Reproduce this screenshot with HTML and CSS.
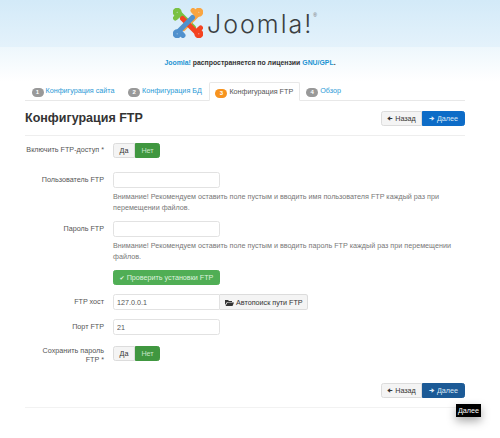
FILE: index.html
```html
<!DOCTYPE html>
<html lang="ru">
<head>
    <meta charset="UTF-8">
    <title>Конфигурация FTP</title>
    <link rel="stylesheet" href="styles.css">
</head>
<body>
    <div class="header">
        <div class="logo">
            <svg width="30" height="30" viewBox="0 0 30 30">
                <g fill="none" stroke-width="5" stroke-linecap="round" stroke-linejoin="round">
                    <g stroke="#7ac143">
                        <path d="M2.500 10 L7 6 L20.500 19.500"/>
                        <circle cx="4.200" cy="4.200" r="2"/>
                    </g>
                    <g stroke="#f9a541" transform="rotate(90 15 15)">
                        <path d="M2.500 10 L7 6 L20.500 19.500"/>
                        <circle cx="4.200" cy="4.200" r="2"/>
                    </g>
                    <g stroke="#f44321" transform="rotate(180 15 15)">
                        <path d="M2.500 10 L7 6 L20.500 19.500"/>
                        <circle cx="4.200" cy="4.200" r="2"/>
                    </g>
                    <g stroke="#5091cd" transform="rotate(270 15 15)">
                        <path d="M2.500 10 L7 6 L20.500 19.500"/>
                        <circle cx="4.200" cy="4.200" r="2"/>
                    </g>
                </g>
            </svg>
            <span class="logo-text">Joomla!</span><span class="logo-reg">®</span>
        </div>
    </div>
    <div class="license">
        <a href="#">Joomla!</a> распространяется по лицензии <a href="#">GNU/GPL</a>.
    </div>
    <div class="container">
        <ul class="tabs">
            <li><span class="num">1</span><a href="#">Конфигурация сайта</a></li>
            <li><span class="num">2</span><a href="#">Конфигурация БД</a></li>
            <li class="active"><span class="num">3</span>Конфигурация FTP</li>
            <li><span class="num">4</span><a href="#">Обзор</a></li>
        </ul>
        <div class="title-row">
            <h2>Конфигурация FTP</h2>
            <div class="btn-group">
                <button class="btn"><span class="arrow">&#129032;</span>Назад</button>
                <button class="btn btn-primary"><span class="arrow">&#129034;</span>Далее</button>
            </div>
        </div>
        <form class="form" autocomplete="off">
            <div class="row row-first">
                <label>Включить FTP-доступ *</label>
                <div class="toggle">
                    <button type="button" class="btn">Да</button>
                    <button type="button" class="btn btn-on">Нет</button>
                </div>
            </div>
            <div class="row row-user">
                <label class="middle">Пользователь FTP</label>
                <div class="field">
                    <input type="text">
                    <p class="help">Внимание! Рекомендуем оставить поле пустым и вводить имя пользователя FTP каждый раз при перемещении файлов.</p>
                </div>
            </div>
            <div class="row row-pass">
                <label class="middle">Пароль FTP</label>
                <div class="field">
                    <input type="password">
                    <p class="help">Внимание! Рекомендуем оставить поле пустым и вводить пароль FTP каждый раз при перемещении файлов.</p>
                </div>
            </div>
            <div class="row row-check">
                <label></label>
                <button type="button" class="btn btn-success"><span class="arrow">✔</span>Проверить установки FTP</button>
            </div>
            <div class="row row-host">
                <label class="middle">FTP хост</label>
                <div class="input-group">
                    <input type="text" value="127.0.0.1">
                    <button type="button" class="btn btn-addon">
                        <svg width="9" height="7" viewBox="0 0 9 7"><path d="M0 1h3l1 1h3v1H2L0 6zM2.500 3.500H9L7.500 7H.5z" fill="#333"/></svg>Автопоиск пути FTP
                    </button>
                </div>
            </div>
            <div class="row row-port">
                <label class="middle">Порт FTP</label>
                <input type="text" value="21">
            </div>
            <div class="row row-save">
                <label>Сохранить пароль FTP&nbsp;*</label>
                <div class="toggle">
                    <button type="button" class="btn">Да</button>
                    <button type="button" class="btn btn-on">Нет</button>
                </div>
            </div>
        </form>
        <div class="bottom-row">
            <div class="btn-group">
                <button class="btn"><span class="arrow">&#129032;</span>Назад</button>
                <button class="btn btn-hover"><span class="arrow">&#129034;</span>Далее</button>
            </div>
            <div class="tooltip">Далее</div>
        </div>
    </div>
</body>
</html>
```

FILE: styles.css
```css
html, body {
    margin: 0;
    padding: 0;
}
body {
    background: #fff;
    font-family: "Liberation Sans", Arial, sans-serif;
    font-size: 7.2px;
    color: #555;
    height: 438px;
    overflow: hidden;
}
a {
    color: #2a9ad6;
    text-decoration: none;
}
.header {
    height: 47px;
    background: linear-gradient(#d3eaf8, #e4f2fb);
    box-sizing: border-box;
    padding-top: 8px;
}
.logo {
    display: flex;
    justify-content: center;
    align-items: flex-start;
    height: 30px;
    margin-left: -10px;
}
.logo-text {
    font-family: Inter, sans-serif;
    font-weight: 300;
    font-size: 25px;
    letter-spacing: 2px;
    line-height: 32px;
    color: #3b3f42;
    margin-left: 4px;
}
.logo-reg {
    font-size: 5px;
    color: #666;
    line-height: 14px;
}
.license {
    height: 35px;
    box-sizing: border-box;
    padding-top: 11px;
    background: linear-gradient(#eef7fc, #fff);
    text-align: center;
    font-size: 6.900px;
    font-weight: bold;
    color: #333;
    line-height: 10px;
}
.license a {
    color: #1c93d2;
}
.container {
    margin: 0 35px 0 25px;
    position: relative;
}
.tabs {
    list-style: none;
    margin: 0;
    padding: 0;
    display: flex;
    height: 19px;
    border-bottom: 1px solid #e8e8e8;
    box-sizing: border-box;
    line-height: 18px;
}
.tabs li {
    padding: 0 7px 0 6.500px;
    white-space: nowrap;
}
.tabs li.active {
    background: #fff;
    border: 1px solid #e8e8e8;
    border-bottom: 1px solid #fff;
    border-radius: 2px 2px 0 0;
    height: 19px;
    box-sizing: border-box;
    padding: 0 5.500px;
    line-height: 17px;
}
.num {
    display: inline-block;
    background: #999;
    color: #fff;
    border-radius: 4.500px;
    width: 12px;
    height: 9px;
    line-height: 9px;
    text-align: center;
    font-size: 6px;
    font-weight: bold;
    margin-right: 2px;
    vertical-align: -0.500px;
}
.active .num {
    background: #f7931e;
}
.title-row {
    display: flex;
    justify-content: space-between;
    align-items: center;
    height: 35px;
    border-bottom: 1px solid #eee;
    box-sizing: border-box;
}
h2 {
    margin: 0;
    font-size: 12.500px;
    color: #333;
}
.btn {
    font: inherit;
    height: 15px;
    padding: 0 7px;
    border: 1px solid #dcdcdc;
    border-radius: 2.500px;
    background: #f4f4f4;
    color: #333;
    white-space: nowrap;
    line-height: 13px;
}
.arrow {
    margin-right: 2px;
    font-family: "DejaVu Sans", sans-serif;
    font-size: 6px;
}
.btn-group {
    display: flex;
}
.btn-group .btn {
    width: 41px;
    padding: 0;
    border-radius: 2.500px 0 0 2.500px;
}
.btn-group .btn-primary,
.btn-group .btn-hover {
    width: 43px;
    border-radius: 0 2.500px 2.500px 0;
    color: #dbe9f6;
}
.btn-primary {
    background: #0d6cc7;
    border-color: #0d6cc7;
}
.btn-hover {
    background: #1c5a96;
    border-color: #1c5a96;
}
.row {
    display: flex;
    align-items: flex-start;
}
.row label {
    width: 79px;
    margin-right: 9px;
    flex: none;
    text-align: right;
    line-height: 9px;
}
.row label.middle {
    line-height: 15px;
}
.row-first {
    margin-top: 7px;
}
.row-first label {
    padding-top: 2px;
}
.row-user {
    margin-top: 14px;
}
.row-pass {
    margin-top: 8px;
}
.row-check {
    margin-top: 8px;
}
.row-host {
    margin-top: 9px;
}
.row-port {
    margin-top: 9px;
}
.row-save {
    margin-top: 11px;
}
.toggle {
    display: flex;
}
.toggle .btn {
    width: 22px;
    padding: 0;
    border-radius: 2.500px 0 0 2.500px;
}
.toggle .btn-on {
    width: 25px;
    background: #409740;
    border-color: #409740;
    color: #c8e6c8;
    border-radius: 0 2.500px 2.500px 0;
}
input {
    font: inherit;
    width: 107px;
    height: 16px;
    box-sizing: border-box;
    padding: 0 3px;
    border: 1px solid #e2e2e2;
    border-radius: 2.500px;
    background: #fff;
    color: #555;
    display: block;
}
.help {
    margin: 4px 0 0;
    width: 345px;
    line-height: 10.500px;
    color: #777;
}
.btn-success {
    background: #50ae55;
    border-color: #50ae55;
    color: #dff2df;
    width: 107px;
    padding: 0;
}
.input-group {
    display: flex;
}
.input-group input {
    border-radius: 2.500px 0 0 2.500px;
}
.btn-addon {
    height: 16px;
    border-left: none;
    border-radius: 0 2.500px 2.500px 0;
    padding: 0 5px;
    width: 88px;
}
.btn-addon svg {
    margin-right: 2px;
    vertical-align: -1px;
}
.bottom-row {
    display: flex;
    justify-content: flex-end;
    align-items: flex-start;
    height: 44px;
    padding-top: 19px;
    border-bottom: 1px solid #f2f2f2;
    box-sizing: border-box;
}
.tooltip {
    position: absolute;
    right: -16px;
    bottom: -9px;
    width: 25px;
    height: 13px;
    line-height: 13px;
    text-align: center;
    background: #000;
    color: #fff;
    box-shadow: 0 4px 10px rgba(0,0,0,0.35);
}
```
